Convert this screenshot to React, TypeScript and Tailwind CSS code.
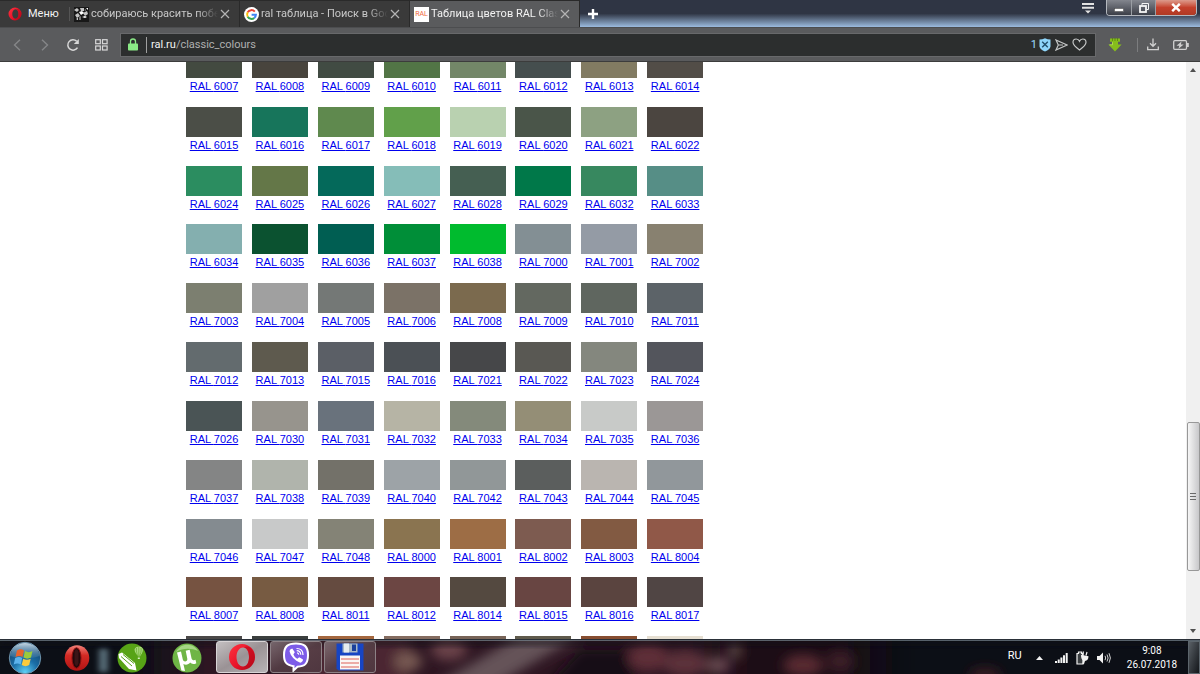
import type { ReactNode } from "react";

// ── Data ───────────────────────────────────────────────────────────────────

interface Swatch {
    code: number;
    color: string;
}

const SWATCHES: Swatch[] = [
    { code: 6007, color: "#434a40" },
    { code: 6008, color: "#48443d" },
    { code: 6009, color: "#414b43" },
    { code: 6010, color: "#527546" },
    { code: 6011, color: "#738768" },
    { code: 6012, color: "#454e4e" },
    { code: 6013, color: "#827b62" },
    { code: 6014, color: "#524d47" },

    { code: 6015, color: "#4b4e47" },
    { code: 6016, color: "#17755b" },
    { code: 6017, color: "#5f894e" },
    { code: 6018, color: "#61a04a" },
    { code: 6019, color: "#b9d1b0" },
    { code: 6020, color: "#4a5549" },
    { code: 6021, color: "#8da182" },
    { code: 6022, color: "#4b4540" },

    { code: 6024, color: "#2b8d60" },
    { code: 6025, color: "#647748" },
    { code: 6026, color: "#04695a" },
    { code: 6027, color: "#85bdb8" },
    { code: 6028, color: "#455f52" },
    { code: 6029, color: "#007849" },
    { code: 6032, color: "#37885f" },
    { code: 6033, color: "#568e86" },

    { code: 6034, color: "#84afaf" },
    { code: 6035, color: "#0b5230" },
    { code: 6036, color: "#005e52" },
    { code: 6037, color: "#008e38" },
    { code: 6038, color: "#00bb2e" },
    { code: 7000, color: "#838f94" },
    { code: 7001, color: "#949ba5" },
    { code: 7002, color: "#888170" },

    { code: 7003, color: "#7c7f70" },
    { code: 7004, color: "#a0a0a0" },
    { code: 7005, color: "#747876" },
    { code: 7006, color: "#7b7267" },
    { code: 7008, color: "#7b6a4e" },
    { code: 7009, color: "#636860" },
    { code: 7010, color: "#5f665f" },
    { code: 7011, color: "#5c6368" },

    { code: 7012, color: "#636b6e" },
    { code: 7013, color: "#5e5a4e" },
    { code: 7015, color: "#5b5f66" },
    { code: 7016, color: "#4b5055" },
    { code: 7021, color: "#464749" },
    { code: 7022, color: "#595853" },
    { code: 7023, color: "#84877e" },
    { code: 7024, color: "#53555c" },

    { code: 7026, color: "#4a5455" },
    { code: 7030, color: "#97948d" },
    { code: 7031, color: "#69727c" },
    { code: 7032, color: "#b6b4a5" },
    { code: 7033, color: "#848a7b" },
    { code: 7034, color: "#948e76" },
    { code: 7035, color: "#c8cac8" },
    { code: 7036, color: "#9b9796" },

    { code: 7037, color: "#848585" },
    { code: 7038, color: "#b0b4ac" },
    { code: 7039, color: "#737169" },
    { code: 7040, color: "#9da3a7" },
    { code: 7042, color: "#919798" },
    { code: 7043, color: "#5b5e5d" },
    { code: 7044, color: "#bab5b0" },
    { code: 7045, color: "#91979b" },

    { code: 7046, color: "#848b90" },
    { code: 7047, color: "#c8c9c9" },
    { code: 7048, color: "#848376" },
    { code: 8000, color: "#8a7450" },
    { code: 8001, color: "#9d6d45" },
    { code: 8002, color: "#7d5b50" },
    { code: 8003, color: "#825a42" },
    { code: 8004, color: "#905848" },

    { code: 8007, color: "#765341" },
    { code: 8008, color: "#775b42" },
    { code: 8011, color: "#654b40" },
    { code: 8012, color: "#6c4643" },
    { code: 8014, color: "#544940" },
    { code: 8015, color: "#684542" },
    { code: 8016, color: "#5a443f" },
    { code: 8017, color: "#504544" },
];

// Last row, only its top edge is in view
const NEXT_ROW = ["#4a4848", "#3b3f3e", "#a4673f", "#846c60", "#776458", "#5f5a4c", "#874e31", "#e6dfd2"];

// ── Icons ──────────────────────────────────────────────────────────────────

function OperaRing({ size }: { size: number }) {
    return (
        <svg width={size} height={size} viewBox="0 0 28 28">
            <defs>
                <linearGradient id="ring" x1="0" y1="0" x2="1" y2="1">
                    <stop offset="0" stopColor="#ff3340" />
                    <stop offset="0.55" stopColor="#e8142a" />
                    <stop offset="1" stopColor="#a50514" />
                </linearGradient>
            </defs>
            <path
                fill="url(#ring)"
                fillRule="evenodd"
                d="M14 1a13 13 0 1 0 0 26a13 13 0 1 0 0-26zM15 4.500c4 0 6 4.500 6 9.500s-2 9.500-6 9.500S8.500 19 8.500 14s2.500-9.500 6.500-9.500z"
            />
            <path fill="#c00c1c" opacity="0.7" d="M16 4.500c3-2 6-.5 8 2c4 5 3.500 11-1 16c-2 1.500-4.500 2-7 1c4-1 5-5 5-9.500s-1-8.500-5-9.500z" />
        </svg>
    );
}

function PhotoFavicon() {
    return (
        <svg width="15" height="15" viewBox="0 0 15 15">
            <rect width="15" height="15" fill="#181818" />
            <path d="M0 3l3-2 2 2-2 2zM6 1h4v3H7zM1 8l3-2 2 3-3 2zM9 6l4-2 1 3-3 2z" fill="#c4c4c4" />
            <path d="M5 5l3-1 2 2-3 2zM8 10l3-1 2 1-2 1zM2 12l2-1v2zM12 1h2v2z" fill="#fff" />
            <path d="M5 10l2-1v4H5zM10 3l2-1v2z" fill="#777" />
        </svg>
    );
}

function GoogleFavicon() {
    return (
        <svg width="15" height="15" viewBox="0 0 15 15">
            <circle cx="7.500" cy="7.500" r="7.500" fill="#fff" />
            <g fill="none" strokeWidth="2">
                <path d="M10.800 4.600A4.400 4.400 0 0 0 3.700 5.300" stroke="#ea4335" />
                <path d="M3.700 5.300A4.400 4.400 0 0 0 3.700 9.700" stroke="#fbbc05" />
                <path d="M3.700 9.700A4.400 4.400 0 0 0 10.300 10.900" stroke="#34a853" />
                <path d="M10.300 10.900A4.400 4.400 0 0 0 11.900 7.700H7.600" stroke="#4285f4" />
            </g>
        </svg>
    );
}

function CloseIcon() {
    return (
        <svg width="10" height="10" viewBox="0 0 10 10" stroke="currentColor" strokeWidth="1.200">
            <path d="M1 1l8 8M9 1l-8 8" />
        </svg>
    );
}

function ReloadIcon() {
    return (
        <svg width="14" height="14" viewBox="0 0 14 14">
            <path d="M11.500 9.600A5.200 5.200 0 1 1 10.700 3.300" fill="none" stroke="#d8d8d8" strokeWidth="1.500" />
            <path d="M12.800 1v5H7.800z" fill="#d8d8d8" />
        </svg>
    );
}

function GridIcon() {
    return (
        <svg width="13" height="12" viewBox="0 0 13 12" fill="none" stroke="#d8d8d8" strokeWidth="1.200">
            <rect x="0.700" y="0.700" width="4.600" height="4" />
            <rect x="7.500" y="0.700" width="4.600" height="4" />
            <rect x="0.700" y="7" width="4.600" height="4" />
            <rect x="7.500" y="7" width="4.600" height="4" />
        </svg>
    );
}

function LockIcon() {
    return (
        <svg width="10" height="13" viewBox="0 0 10 13">
            <path d="M2.500 6V3.500a2.500 2.500 0 0 1 5 0V6" fill="none" stroke="#8aea86" strokeWidth="1.300" />
            <rect y="5.500" width="10" height="7" rx="0.800" fill="#8aea86" />
        </svg>
    );
}

function ShieldIcon() {
    return (
        <svg width="12" height="14" viewBox="0 0 12 14">
            <path d="M0.500 1.500Q3.500 1.500 6 0.300Q8.500 1.500 11.500 1.500V8.500Q11 11.500 6 13.500Q1 11.500 0.500 8.500z" fill="#8fd6fb" />
            <path d="M3.200 3.700l5.600 5.600M8.800 3.700L3.200 9.300" stroke="#22506b" strokeWidth="1.400" />
        </svg>
    );
}

function SendIcon() {
    return (
        <svg width="13" height="12" viewBox="0 0 13 12" fill="none" stroke="#c4c6c6" strokeWidth="1.200">
            <path d="M1 1l11 5-11 5 2.300-5zM3.300 6H8" />
        </svg>
    );
}

function HeartIcon() {
    return (
        <svg width="15" height="13" viewBox="0 0 15 13" fill="none" stroke="#c4c6c6" strokeWidth="1.200">
            <path d="M7.500 12C4 9.500 1 7 1 4.300C1 2.300 2.500 1 4.200 1C5.700 1 6.900 1.900 7.500 3.200C8.100 1.900 9.300 1 10.800 1C12.500 1 14 2.300 14 4.300C14 7 11 9.500 7.500 12z" />
        </svg>
    );
}

function GreenArrowIcon() {
    return (
        <svg width="14" height="14" viewBox="0 0 14 14">
            <path d="M2 0.500h10v3.200h-2V6.500h3.600L7 13.500L0.400 6.500H4V3.700H2z" fill="#86bd1c" />
            <path d="M4.500 0v3M7 0v3M9.500 0v3" stroke="#4f7a0c" strokeWidth="0.700" />
            <path d="M1.500 6.800h3V4.200" fill="none" stroke="#b9e35a" strokeWidth="0.800" />
        </svg>
    );
}

function DownloadIcon() {
    return (
        <svg width="12" height="13" viewBox="0 0 12 13" fill="none" stroke="#d0d0d0" strokeWidth="1.300">
            <path d="M6 0.500v7.500M3 5.300l3 3 3-3M0.700 8.500v3.200h10.600V8.500" />
        </svg>
    );
}

function BatterySaverIcon() {
    return (
        <svg width="16" height="10" viewBox="0 0 16 10">
            <rect x="0.700" y="0.700" width="12.800" height="8.600" rx="1" fill="none" stroke="#d0d0d0" strokeWidth="1.300" />
            <rect x="13.800" y="3" width="2" height="4" fill="#d0d0d0" />
            <path d="M8.500 1.500L3.500 5.700h2.800L5.500 8.700l5.200-4.300H7.900z" fill="#d0d0d0" />
        </svg>
    );
}

function StartOrb() {
    return (
        <svg width="34" height="34" viewBox="0 0 34 34">
            <defs>
                <radialGradient id="orb" cx="0.5" cy="0.95" r="0.9">
                    <stop offset="0" stopColor="#5fd0f5" />
                    <stop offset="0.45" stopColor="#1b6fa8" />
                    <stop offset="1" stopColor="#123f66" />
                </radialGradient>
                <linearGradient id="orbShine" x1="0" y1="0" x2="0" y2="1">
                    <stop offset="0" stopColor="#d9e8f2" stopOpacity="0.9" />
                    <stop offset="1" stopColor="#6b9ab9" stopOpacity="0.2" />
                </linearGradient>
            </defs>
            <circle cx="17" cy="17" r="15.700" fill="url(#orb)" stroke="#6f93ab" />
            <path d="M2.500 15C3 7 9 2 17 2s14 5 14.500 13C24 18 10 18 2.500 15z" fill="url(#orbShine)" />
            <path d="M9 9.500c3-2 5-1.500 7 0l-1.500 6.500c-2-1.500-4.500-1.500-7 0z" fill="#e8642c" />
            <path d="M17 10c2.500 1.500 5 1.500 7.500 0L23 16.500c-2.500 1.500-5 1.500-7.500 0z" fill="#9ccb3b" />
            <path d="M7.200 17c2.500-1.500 5-1.500 7 0l-1.500 6.500c-2-1.500-4.500-1.500-7 0z" fill="#5cb3ec" />
            <path d="M15.200 17.700c2.500 1.500 5 1.500 7.500 0L21.200 24c-2.500 1.500-5 1.500-7.500 0z" fill="#fbcb3c" />
        </svg>
    );
}

function OldOperaIcon() {
    return (
        <svg width="26" height="26" viewBox="0 0 26 26">
            <defs>
                <linearGradient id="oldOpera" x1="0" y1="0" x2="0" y2="1">
                    <stop offset="0" stopColor="#f08078" />
                    <stop offset="0.4" stopColor="#d42a24" />
                    <stop offset="1" stopColor="#b01414" />
                </linearGradient>
            </defs>
            <ellipse cx="13" cy="13" rx="12.300" ry="12.700" fill="url(#oldOpera)" />
            <ellipse cx="12.500" cy="13" rx="4.500" ry="10.200" fill="#23090b" stroke="#8c1010" />
            <path d="M10.500 7c1-4 3-4 4 0v11c-1 4-3 4-4 0z" fill="#3a1517" />
        </svg>
    );
}

function CorelIcon() {
    return (
        <svg width="30" height="30" viewBox="0 0 30 30">
            <circle cx="15" cy="15" r="14.500" fill="#57a316" />
            <path d="M1.500 11L5 9.500L18 20l1.500 7.500L12 26L2 15z" fill="#fff" />
            <path d="M4 13.500l11 9.500M6 11.500l11 9" stroke="#57a316" />
            <path d="M17.500 6.500c1-4 8-4 8.500 0c0 3-2 5-3 7h-2c-1-2-3.500-4-3.500-7z" fill="#a9d97e" />
            <path d="M21.800 3.500v10M19.500 5c-.5 3 .5 6 1.500 8.500M24 5c.5 3-.5 6-1.500 8.500" fill="none" stroke="#57a316" strokeWidth="0.600" />
            <rect x="20.800" y="14.500" width="2" height="1.500" fill="#d8f0c4" />
        </svg>
    );
}

function TorrentIcon() {
    return (
        <svg width="30" height="30" viewBox="0 0 30 30">
            <circle cx="15" cy="15" r="14.500" fill="#6fb545" />
            <path d="M4 9c4-9 17-10 22-1c-7-3-15-3-22 1z" fill="#a6d585" />
            <path
                d="M5 9.500l4-1l1.800 8c.7 3 5 2.300 4.500-.8L13.700 7.700l4-.9l1.800 8.400c.5 2.200 2.700 2.500 4 1.600l.8 3.400c-2.400 1.400-4.800 1-6.200-.6c-1.500 2.200-4.700 2.700-6.700 1.300l1.600 7l-3.600-.5z"
                fill="#fff"
            />
        </svg>
    );
}

function ViberIcon() {
    return (
        <svg width="28" height="30" viewBox="0 0 28 30">
            <path
                d="M14 1.500c8 0 12 2.500 12 11.500s-3.500 11.500-10.500 11.700L11.500 28.500v-4.300C4.500 23 2 20.500 2 13C2 4 6 1.500 14 1.500z"
                fill="#7d5ce8"
                stroke="#fff"
                strokeWidth="2"
            />
            <path
                d="M8.500 7.200l1.800-.7l2.500 3.700l-1.400 2c.8 2.200 2 3.500 4 4.500l1.800-1.500l3.800 2.400c0 1.600-1.200 3-2.700 3.100C12.800 18.500 8.500 14 7.500 9z"
                fill="#fff"
            />
            <path d="M14.500 6.500c4 0 6.500 2.500 6.500 6.500M14.700 8.700c2.600.1 4 1.600 4.100 4M15 10.800c1.200.1 1.700.7 1.800 1.800" fill="none" stroke="#fff" strokeWidth="1.200" />
        </svg>
    );
}

function FloppyIcon() {
    return (
        <svg width="28" height="28" viewBox="0 0 28 28">
            <path d="M0.500 0.500h27v27H2.500l-2-2z" fill="#1745c4" />
            <path d="M6.500 0.500h15V9.500h-15z" fill="#a9b8c6" />
            <path d="M8 0.500h5v9H8z" fill="#e6ecef" />
            <path d="M16 1.500h4v6.500h-4z" fill="#1c3f9a" />
            <path d="M4 12.500h20v14H4z" fill="#fbf6f4" />
            <path d="M5 16h18M5 20h18M5 24h18" stroke="#dd6058" strokeWidth="1.200" />
        </svg>
    );
}

function SignalIcon() {
    return (
        <svg width="13" height="10" viewBox="0 0 13 10" fill="#f2f2f2">
            <path d="M0 8h2v2H0zM2.700 6.500h2V10h-2zM5.400 4.500h2V10h-2zM8 2.300h2V10H8zM10.700 0h2v10h-2z" />
        </svg>
    );
}

function PlugIcon() {
    return (
        <svg width="13" height="14" viewBox="0 0 13 14">
            <path d="M1 2.500h1.500V1h3v1.500H7V13H1z" fill="#3b3f42" stroke="#f2f2f2" strokeWidth="1.200" />
            <path d="M6.500 4l1-3.500M10 4.500l1-3.500" stroke="#f2f2f2" strokeWidth="1.200" />
            <path d="M5 3.800l7.500 1.500c0 3-1.500 4.500-3.500 4.700L8 13H6.500l.5-3.500C5.500 8.500 5 6.500 5 3.800z" fill="#f2f2f2" />
        </svg>
    );
}

function SpeakerIcon() {
    return (
        <svg width="14" height="12" viewBox="0 0 14 12">
            <path d="M0 4h2.500L6 0.500v11L2.500 8H0z" fill="#f2f2f2" />
            <path d="M8 3.800q1.400 2.200 0 4.400M10 2.500q2.200 3.500 0 7M12 1.200q2.800 4.800 0 9.600" fill="none" stroke="#d2d2d2" />
        </svg>
    );
}

// Blurred wallpaper showing through the taskbar glass
function TaskbarGlass() {
    return (
        <svg className="absolute inset-0 h-full w-full" viewBox="0 0 1200 35" preserveAspectRatio="none">
            <defs>
                <filter id="wide" x="-20%" y="-50%" width="140%" height="200%">
                    <feGaussianBlur stdDeviation="24 3" />
                </filter>
                <filter id="soft" x="-20%" y="-50%" width="140%" height="200%">
                    <feGaussianBlur stdDeviation="6" />
                </filter>
                <filter id="small" x="-100%" y="-50%" width="300%" height="200%">
                    <feGaussianBlur stdDeviation="3" />
                </filter>
            </defs>
            <rect width="1200" height="35" fill="#0c0f16" />
            <g filter="url(#wide)">
                <rect x="170" y="-20" width="550" height="80" fill="#2e1822" />
                <rect x="720" y="-20" width="150" height="80" fill="#1e1119" />
            </g>
            <g filter="url(#soft)">
                <rect x="300" y="-5" width="110" height="50" fill="#4c2731" />
                <ellipse cx="408" cy="22" rx="14" ry="10" fill="#785a53" />
                <ellipse cx="449" cy="10" rx="18" ry="11" fill="#6b4248" />
                <path d="M430 50L520 -5h60L490 50z" fill="#655259" />
                <path d="M545 50l35-40h55v40z" fill="#170e16" />
                <ellipse cx="648" cy="18" rx="20" ry="14" fill="#5e2f38" />
                <ellipse cx="685" cy="24" rx="22" ry="13" fill="#5d303a" />
                <ellipse cx="718" cy="26" rx="12" ry="8" fill="#6b4c52" />
                <ellipse cx="735" cy="11" rx="7" ry="9" fill="#54443f" />
                <ellipse cx="803" cy="26" rx="20" ry="11" fill="#5a2c33" />
                <ellipse cx="840" cy="22" rx="14" ry="11" fill="#3b1d26" />
                <ellipse cx="985" cy="36" rx="16" ry="7" fill="#3d1c24" />
            </g>
            <rect x="99" y="9" width="9" height="24" fill="#6d8794" opacity="0.800" filter="url(#small)" />
            <rect width="1200" height="6" fill="#0a0f16" opacity="0.500" filter="url(#small)" />
        </svg>
    );
}

// ── Browser chrome ─────────────────────────────────────────────────────────

interface TabProps {
    icon: ReactNode;
    title: string;
    active?: boolean;
}

function Tab({ icon, title, active }: TabProps) {
    return (
        <div
            className={`flex w-[170px] items-center gap-[2px] border-r border-[#2a2a2a] pr-[9px] pl-1 ${
                active ? "bg-[#5a5b5d] text-[#f2f2f2]" : "bg-[#3a3a3a] text-[#c8c8c8]"
            }`}
        >
            {icon}
            <span className="min-w-0 flex-1 text-[11px] leading-4 whitespace-nowrap [mask-image:linear-gradient(to_right,black_84%,transparent)]">
                {title}
            </span>
            <button aria-label="Закрыть вкладку" className="text-[#b4b4b4]">
                <CloseIcon />
            </button>
        </div>
    );
}

function TabBar() {
    return (
        <div className="flex h-[27px] shrink-0 bg-linear-to-b from-[#2f3544] from-50% via-[#5f7088] via-72% to-[#9cbce0]">
            <button className="flex w-[70px] items-center gap-[6px] border-t border-[#2a2a2a] bg-[#3a3a3a] pl-2 text-[11px] leading-4 text-[#f2f2f2]">
                <OperaRing size={14} />
                Меню
                <span className="ml-1 h-[14px] w-px bg-[#555]" />
            </button>
            <div className="flex border-t border-[#2a2a2a]">
                <Tab icon={<PhotoFavicon />} title="собираюсь красить побе" />
                <Tab icon={<GoogleFavicon />} title="ral таблица - Поиск в Goo" />
                <Tab
                    active
                    icon={
                        <span className="flex h-[15px] w-[15px] items-center justify-center bg-white text-[7px] leading-none text-[#f0683c]">
                            RAL
                        </span>
                    }
                    title="Таблица цветов RAL Class"
                />
            </div>
            <button aria-label="Новая вкладка" className="px-2 text-white">
                <svg width="10" height="10" viewBox="0 0 10 10" stroke="currentColor" strokeWidth="2.400">
                    <path d="M5 0v10M0 5h10" />
                </svg>
            </button>
            <div className="flex flex-1 items-start justify-end pr-[3px]">
                <button aria-label="Меню вкладок" className="mt-[3px] mr-3">
                    <svg width="12" height="11" viewBox="0 0 12 11" fill="#e2e2e2">
                        <path d="M0 0h12v2H0zM0 3.800h12v2H0zM3 7.500h6L6 10.500z" />
                    </svg>
                </button>
                <div className="flex h-4 overflow-hidden rounded-b-sm border border-t-0 border-[#b4b8be]">
                    <button aria-label="Свернуть" className="flex w-[25px] items-center justify-center border-r border-[#9a9ea4] bg-linear-to-b from-[#83868e] to-[#3c3f48]">
                        <svg width="10" height="8" viewBox="0 0 10 8">
                            <rect x="0.500" y="4.500" width="9" height="3" fill="#fff" stroke="#444" strokeWidth="0.500" />
                        </svg>
                    </button>
                    <button aria-label="Развернуть" className="flex w-6 items-center justify-center border-r border-[#9a9ea4] bg-linear-to-b from-[#83868e] to-[#3c3f48]">
                        <svg width="10" height="10" viewBox="0 0 10 10" fill="none" stroke="#f4f4f4">
                            <path d="M3 2.500V0.500h6.500v6h-2" />
                            <rect x="1" y="3" width="6" height="6" strokeWidth="1.800" />
                        </svg>
                    </button>
                    <button aria-label="Закрыть" className="flex w-10 items-center justify-center bg-linear-to-b from-[#dc9a8c] via-[#c4402c] via-50% to-[#b03a24]">
                        <svg width="10" height="9" viewBox="0 0 10 9" stroke="#fff" strokeWidth="2.400">
                            <path d="M1.200 0.800l7.600 7.400M8.800 0.800L1.200 8.200" />
                        </svg>
                    </button>
                </div>
            </div>
        </div>
    );
}

function Toolbar() {
    return (
        <div className="flex h-[35px] shrink-0 items-center border-t border-b border-t-[#4c4d4f] border-b-[#3c3c3c] bg-[#5a5b5d] pl-[3px]">
            <button aria-label="Назад" className="flex w-7 justify-center">
                <svg width="8" height="12" viewBox="0 0 8 12" fill="none" stroke="#858688" strokeWidth="1.400">
                    <path d="M7 0.700L1.500 6L7 11.300" />
                </svg>
            </button>
            <button aria-label="Вперёд" className="flex w-7 justify-center">
                <svg width="8" height="12" viewBox="0 0 8 12" fill="none" stroke="#858688" strokeWidth="1.400">
                    <path d="M1 0.700L6.500 6L1 11.300" />
                </svg>
            </button>
            <button aria-label="Обновить" className="flex w-7 justify-center">
                <ReloadIcon />
            </button>
            <button aria-label="Экспресс-панель" className="flex w-7 justify-center">
                <GridIcon />
            </button>
            <div className="ml-[5px] flex h-6 flex-1 items-center border border-[#68696b] bg-[#2c2e2e] pr-2 pl-[7px] text-[11px] leading-4">
                <LockIcon />
                <span className="mr-1 ml-2 h-4 w-px bg-[#a0a0a0]" />
                <label htmlFor="address" className="text-[#f4f4f4]">
                    ral.ru
                </label>
                <input
                    id="address"
                    defaultValue="/classic_colours"
                    className="min-w-0 flex-1 bg-transparent text-[#b0b0b0] outline-none"
                />
                <div className="flex items-center gap-1">
                    <span className="-mr-[2px] text-[#9edcff]">1</span>
                    <ShieldIcon />
                    <SendIcon />
                    <HeartIcon />
                </div>
            </div>
            <button aria-label="Загрузчик" className="ml-3">
                <GreenArrowIcon />
            </button>
            <span className="ml-[15px] h-[14px] w-px bg-[#7c7d7f]" />
            <button aria-label="Загрузки" className="ml-[9px]">
                <DownloadIcon />
            </button>
            <button aria-label="Экономия заряда" className="mr-[11px] ml-[14px]">
                <BatterySaverIcon />
            </button>
        </div>
    );
}

// ── Page ───────────────────────────────────────────────────────────────────

function ColourTable() {
    return (
        <ul className="-mt-[14px] ml-[186px] grid h-[647px] w-[527px] grid-cols-8 grid-rows-11">
            {SWATCHES.map((s) => (
                <li key={s.code} className="min-h-0">
                    <a href="#" className="flex w-[56px] flex-col items-center text-[#0000ee]">
                        <span className="h-[30px] w-full" style={{ backgroundColor: s.color }} />
                        <span className="mt-px text-[11px] leading-[14px] whitespace-nowrap underline">RAL {s.code}</span>
                    </a>
                </li>
            ))}
            {NEXT_ROW.map((color) => (
                <li key={color} className="h-[30px] w-[56px]" style={{ backgroundColor: color }} />
            ))}
        </ul>
    );
}

function Scrollbar() {
    return (
        <div className="flex w-[14px] shrink-0 flex-col items-center bg-[#f0f0f0]">
            <svg width="6" height="4" viewBox="0 0 6 4" className="mt-[6px]">
                <path d="M0 4l3-4 3 4z" fill="#505050" />
            </svg>
            <div className="flex-[352]" />
            <div className="flex h-[149px] w-[13px] items-center justify-center rounded-[2px] border border-[#989898] bg-linear-to-r from-[#f6f6f6] to-[#c8c8ca]">
                <svg width="6" height="7" viewBox="0 0 6 7">
                    <path d="M0 0.500h6M0 3.500h6M0 6.500h6" stroke="#6a6a6a" />
                </svg>
            </div>
            <div className="flex-[58]" />
            <svg width="6" height="4" viewBox="0 0 6 4" className="mb-[6px]">
                <path d="M0 0l3 4 3-4z" fill="#505050" />
            </svg>
        </div>
    );
}

// ── Taskbar ────────────────────────────────────────────────────────────────

function Pinned({ label, children }: { label: string; children: ReactNode }) {
    return (
        <button aria-label={label} className="flex w-[55px] items-center justify-center">
            {children}
        </button>
    );
}

function Running({ label, active, children }: { label: string; active?: boolean; children: ReactNode }) {
    return (
        <button
            aria-label={label}
            className={`mr-[2px] mb-px flex w-[52px] items-center justify-center rounded-[3px] border ${
                active
                    ? "border-[#d8d4d6] bg-linear-to-br from-[#c4bfc1] via-[#9a9295] to-[#b8b3b6]"
                    : "border-[#8d8286] bg-linear-to-br from-[#8a7a7f]/80 via-[#5a434a]/80 to-[#503b43]/80"
            }`}
        >
            {children}
        </button>
    );
}

function Taskbar() {
    return (
        <div className="relative h-[35px] shrink-0 overflow-hidden border-t border-[#2a3038]">
            <TaskbarGlass />
            <div className="relative flex h-full border-t border-[#76848f]/70 text-white">
                <button aria-label="Пуск" className="flex w-[49px] items-center justify-center">
                    <StartOrb />
                </button>
                <Pinned label="Opera 12">
                    <OldOperaIcon />
                </Pinned>
                <Pinned label="CorelDRAW">
                    <CorelIcon />
                </Pinned>
                <Pinned label="uTorrent">
                    <TorrentIcon />
                </Pinned>
                <div className="ml-[2px] flex">
                    <Running label="Opera" active>
                        <OperaRing size={28} />
                    </Running>
                    <Running label="Viber">
                        <ViberIcon />
                    </Running>
                    <Running label="Сохранение">
                        <FloppyIcon />
                    </Running>
                </div>
                <div className="flex flex-1 items-center justify-end text-[10px] leading-[14px]">
                    <span className="mr-[14px] mb-1 text-[11px]">RU</span>
                    <svg width="7" height="4" viewBox="0 0 7 4" className="mr-3">
                        <path d="M0 4l3.500-4L7 4z" fill="#f2f2f2" />
                    </svg>
                    <div className="mr-4 flex items-center gap-2">
                        <SignalIcon />
                        <PlugIcon />
                        <SpeakerIcon />
                    </div>
                    <div className="mr-[11px] text-center">
                        <div>9:08</div>
                        <div>26.07.2018</div>
                    </div>
                </div>
                <button
                    aria-label="Свернуть все окна"
                    className="w-3 border border-[#5c656c] bg-linear-to-br from-[#5a6066] to-[#14171b]"
                />
            </div>
        </div>
    );
}

export default function App() {
    return (
        <div className="flex h-screen flex-col overflow-hidden bg-white font-[Roboto,sans-serif]">
            <TabBar />
            <Toolbar />
            <div className="flex min-h-0 flex-1 overflow-hidden">
                <main className="flex-1 overflow-hidden font-['Liberation_Sans',Arial,sans-serif]">
                    <div className="flow-root">
                        <ColourTable />
                    </div>
                </main>
                <Scrollbar />
            </div>
            <Taskbar />
        </div>
    );
}
